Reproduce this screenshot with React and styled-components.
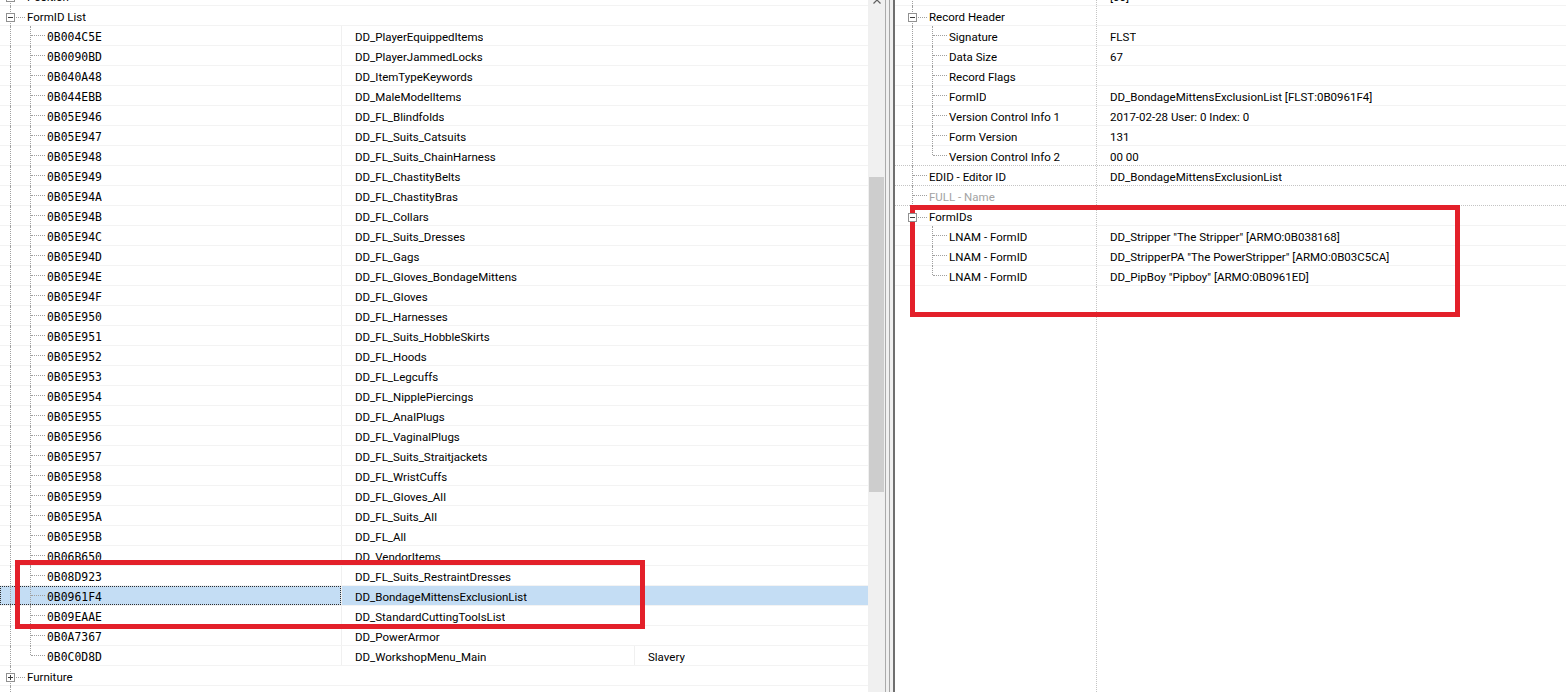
import React from 'react'
import styled, { createGlobalStyle } from 'styled-components'

// ---- data ---- //
const formList = [
  ['0B004C5E', 'DD_PlayerEquippedItems'],
  ['0B0090BD', 'DD_PlayerJammedLocks'],
  ['0B040A48', 'DD_ItemTypeKeywords'],
  ['0B044EBB', 'DD_MaleModelItems'],
  ['0B05E946', 'DD_FL_Blindfolds'],
  ['0B05E947', 'DD_FL_Suits_Catsuits'],
  ['0B05E948', 'DD_FL_Suits_ChainHarness'],
  ['0B05E949', 'DD_FL_ChastityBelts'],
  ['0B05E94A', 'DD_FL_ChastityBras'],
  ['0B05E94B', 'DD_FL_Collars'],
  ['0B05E94C', 'DD_FL_Suits_Dresses'],
  ['0B05E94D', 'DD_FL_Gags'],
  ['0B05E94E', 'DD_FL_Gloves_BondageMittens'],
  ['0B05E94F', 'DD_FL_Gloves'],
  ['0B05E950', 'DD_FL_Harnesses'],
  ['0B05E951', 'DD_FL_Suits_HobbleSkirts'],
  ['0B05E952', 'DD_FL_Hoods'],
  ['0B05E953', 'DD_FL_Legcuffs'],
  ['0B05E954', 'DD_FL_NipplePiercings'],
  ['0B05E955', 'DD_FL_AnalPlugs'],
  ['0B05E956', 'DD_FL_VaginalPlugs'],
  ['0B05E957', 'DD_FL_Suits_Straitjackets'],
  ['0B05E958', 'DD_FL_WristCuffs'],
  ['0B05E959', 'DD_FL_Gloves_All'],
  ['0B05E95A', 'DD_FL_Suits_All'],
  ['0B05E95B', 'DD_FL_All'],
  ['0B06B650', 'DD_VendorItems'],
  ['0B08D923', 'DD_FL_Suits_RestraintDresses'],
  ['0B0961F4', 'DD_BondageMittensExclusionList'],
  ['0B09EAAE', 'DD_StandardCuttingToolsList'],
  ['0B0A7367', 'DD_PowerArmor'],
  ['0B0C0D8D', 'DD_WorkshopMenu_Main', 'Slavery'],
]

const SELECTED = '0B0961F4'

const recordRows = [
  { lines: ['full'], label: '', value: '[00]' },
  { lines: ['full'], box: 'minus', label: 'Record Header' },
  { lines: ['full', 'full'], label: 'Signature', value: 'FLST' },
  { lines: ['full', 'full'], label: 'Data Size', value: '67' },
  { lines: ['full', 'full'], label: 'Record Flags', value: '' },
  { lines: ['full', 'full'], label: 'FormID', value: 'DD_BondageMittensExclusionList [FLST:0B0961F4]' },
  { lines: ['full', 'full'], label: 'Version Control Info 1', value: '2017-02-28 User: 0 Index: 0' },
  { lines: ['full', 'full'], label: 'Form Version', value: '131' },
  { lines: ['full', 'top'], label: 'Version Control Info 2', value: '00 00', sep: 'dotted' },
  { lines: ['full'], label: 'EDID - Editor ID', value: 'DD_BondageMittensExclusionList', sep: 'dotted' },
  { lines: ['full'], label: 'FULL - Name', value: '', muted: true, sep: 'dotted' },
  { lines: ['top'], box: 'minus', label: 'FormIDs' },
  { lines: ['none', 'full'], label: 'LNAM - FormID', value: 'DD_Stripper "The Stripper" [ARMO:0B038168]' },
  { lines: ['none', 'full'], label: 'LNAM - FormID', value: 'DD_StripperPA "The PowerStripper" [ARMO:0B03C5CA]' },
  { lines: ['none', 'top'], label: 'LNAM - FormID', value: 'DD_PipBoy "Pipboy" [ARMO:0B0961ED]' },
]

// ---- tree parts ---- //
function TreeGuides({ lines, box, muted }) {
  return lines.map((line, i) => {
    const last = i === lines.length - 1
    return (
      <Guide key={i} $line={line} $branch={last} $boxed={last && !!box} $muted={muted}>
        {last && box && <Expander $plus={box === 'plus'} />}
      </Guide>
    )
  })
}

function App() {
  return (
    <>
      <GlobalStyle />
      <Screen>
        <LeftPane>
          <List>
            <Row>
              <Cell $w="341px">
                <TreeGuides lines={['full']} box="plus" />
                <Label>Position</Label>
              </Cell>
            </Row>
            <Row>
              <Cell $w="341px">
                <TreeGuides lines={['full']} box="minus" />
                <Label>FormID List</Label>
              </Cell>
            </Row>
            {formList.map(([id, name, extra], i) => {
              const selected = id === SELECTED
              const last = i === formList.length - 1
              return (
                <Row key={id} $selected={selected}>
                  <Cell $w="341px" $focus={selected}>
                    <TreeGuides lines={['full', last ? 'top' : 'full']} />
                    <Label $mono>{id}</Label>
                  </Cell>
                  <Cell $w="293px" $divider $pad="13px">
                    <Label>{name}</Label>
                  </Cell>
                  <Cell $grow $divider={!!extra} $pad="13px">
                    {extra && <Label>{extra}</Label>}
                  </Cell>
                </Row>
              )
            })}
            <Row>
              <Cell $w="341px">
                <TreeGuides lines={['full']} box="plus" />
                <Label>Furniture</Label>
              </Cell>
            </Row>
            <Row>
              <Cell $w="341px">
                <Guide $line="full" />
              </Cell>
            </Row>
          </List>
        </LeftPane>

        <Scrollbar>
          <ScrollButton>
            <svg width="8" height="5" viewBox="0 0 8 5">
              <path d="M0.5 4.5 L4 1 L7.5 4.5" fill="none" stroke="#606060" strokeWidth="1.2" />
            </svg>
          </ScrollButton>
          <Thumb />
        </Scrollbar>

        <Splitter />

        <RightPane>
          <List>
            {recordRows.map((r, i) => (
              <Row key={i} $sep={r.sep}>
                <Cell $w="202px" $pad="7px" $dotted>
                  <TreeGuides lines={r.lines} box={r.box} muted={r.muted} />
                  <Label $muted={r.muted}>{r.label}</Label>
                </Cell>
                <Cell $grow $pad="13px">
                  <Label>{r.value}</Label>
                </Cell>
              </Row>
            ))}
          </List>
          <Filler>
            <FillerColumn />
          </Filler>
        </RightPane>

        <Annotation $left="15px" $top="560px" $w="630px" $h="69px" />
        <Annotation $left="910px" $top="205px" $w="550px" $h="112px" />
      </Screen>
    </>
  )
}

const GlobalStyle = createGlobalStyle`
html, body {
  margin: 0;
  padding: 0;
  background: #fff;
  overflow: hidden;
}
body {
  font-family: Roboto, "Liberation Sans", Arial, sans-serif;
  font-size: 11.5px;
  color: #000;
}
`

const Screen = styled.div`
position: relative;
display: flex;
width: 1566px;
height: 692px;
overflow: hidden;
background: #fff;
`

const LeftPane = styled.div`
flex: none;
width: 868px;
height: 100%;
overflow: hidden;
`

const RightPane = styled.div`
flex: 1;
display: flex;
flex-direction: column;
height: 100%;
overflow: hidden;
`

const List = styled.div`
display: flex;
flex-direction: column;
margin-top: -14px;
`

const Row = styled.div`
display: flex;
flex: none;
height: 20px;
box-sizing: border-box;
border-bottom: 1px ${p => (p.$sep === 'dotted' ? 'dotted #c4c4c4' : 'solid #f3f3f3')};
background: ${p => (p.$selected ? '#c4ddf4' : 'transparent')};
`

const Cell = styled.div`
display: flex;
align-items: stretch;
box-sizing: border-box;
flex: ${p => (p.$grow ? '1' : 'none')};
width: ${p => p.$w || 'auto'};
padding-left: ${p => p.$pad || '0'};
border-left: ${p => (p.$divider ? '1px solid #f0f0f0' : 'none')};
border-right: ${p => (p.$dotted ? '1px dotted #c4c4c4' : 'none')};
outline: ${p => (p.$focus ? '1px dotted #303030' : 'none')};
outline-offset: -1px;
min-width: 0;
`

const Label = styled.span`
box-sizing: border-box;
height: 19px;
padding: 3px 0 0 7px;
line-height: 16px;
white-space: nowrap;
overflow: hidden;
font-family: ${p => (p.$mono ? '"DejaVu Sans Mono", "Liberation Mono", monospace' : 'inherit')};
font-size: ${p => (p.$mono ? '11.4px' : '11.5px')};
color: ${p => (p.$muted ? '#a3a3a3' : '#000')};
${Cell}:not(:first-child) > & {
  padding-left: 0;
}
`

const Guide = styled.span`
position: relative;
flex: none;
width: 20px;

&::before {
  content: '';
  display: ${p => (p.$line === 'none' ? 'none' : 'block')};
  position: absolute;
  left: 10px;
  top: 0;
  bottom: ${p => (p.$line === 'top' ? '10px' : '-1px')};
  border-left: 1px dotted #a0a0a0;
}

&::after {
  content: '';
  display: ${p => (p.$branch ? 'block' : 'none')};
  position: absolute;
  left: 11px;
  top: ${p => (p.$boxed ? '11px' : '9px')};
  width: 14px;
  border-top: 1px dotted #a0a0a0;
}
`

const Expander = styled.span`
position: absolute;
z-index: 1;
left: 6px;
top: 7px;
width: 9px;
height: 9px;
box-sizing: border-box;
border: 1px solid #919191;
background: #fff;

&::before {
  content: '';
  position: absolute;
  left: 1px;
  top: 3px;
  width: 5px;
  height: 1px;
  background: #3c3c3c;
}

&::after {
  content: '';
  display: ${p => (p.$plus ? 'block' : 'none')};
  position: absolute;
  left: 3px;
  top: 1px;
  width: 1px;
  height: 5px;
  background: #3c3c3c;
}
`

const Scrollbar = styled.div`
flex: none;
width: 17px;
height: 100%;
display: flex;
flex-direction: column;
align-items: center;
background: #f0f0f0;
`

const ScrollButton = styled.div`
flex: none;
width: 17px;
height: 17px;
margin-top: -7px;
display: flex;
align-items: center;
justify-content: center;
`

const Thumb = styled.div`
flex: none;
width: 15px;
height: 315px;
margin-top: 167px;
background: #cdcdcd;
`

const Splitter = styled.div`
flex: none;
width: 10px;
height: 100%;
box-sizing: border-box;
border-left: 1px solid #ababab;
border-right: 2px solid #6f6f6f;
background: linear-gradient(to right, #f0f0f0 3px, #a6a6a6 3px, #a6a6a6 4px, #f0f0f0 4px);
`

const Filler = styled.div`
flex: 1;
display: flex;
`

const FillerColumn = styled.div`
width: 202px;
box-sizing: border-box;
border-right: 1px dotted #c4c4c4;
`

const Annotation = styled.div`
position: absolute;
left: ${p => p.$left};
top: ${p => p.$top};
width: ${p => p.$w};
height: ${p => p.$h};
box-sizing: border-box;
border: 5px solid #e3202a;
pointer-events: none;
`

export default App
